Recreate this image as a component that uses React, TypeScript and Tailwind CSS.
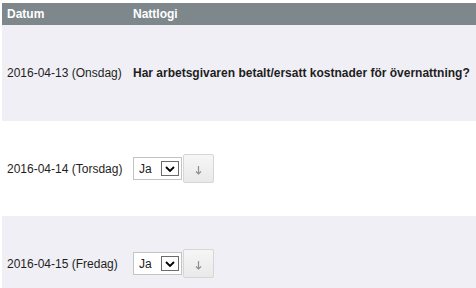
const font = { fontFamily: '"Liberation Sans", Arial, sans-serif' };

const rows = [
  { date: '2016-04-13 (Onsdag)', question: true, h: 'h-[96px]', bg: 'bg-[#f0eff5]' },
  { date: '2016-04-14 (Torsdag)', question: false, h: 'h-[95px]', bg: 'bg-white' },
  { date: '2016-04-15 (Fredag)', question: false, h: 'h-[95px]', bg: 'bg-[#f0eff5]' },
];

const FakeSelect = () => (
  <div className="flex h-[23px] w-[49px] items-center justify-between border border-[#c3c3c3] bg-white pl-[5px] pr-[2px]">
    <span className="text-[12px] leading-none text-[#222]">Ja</span>
    <div className="flex h-[15px] w-[18px] items-center justify-center border border-[#6b6b6b] bg-white">
      <svg width="10" height="6" viewBox="0 0 10 6" fill="none">
        <path d="M1 1l4 4 4-4" stroke="#000" strokeWidth="1.8" />
      </svg>
    </div>
  </div>
);

const DownButton = () => (
  <button className="ml-[1px] flex h-[29px] w-[31px] items-center justify-center rounded-[2px] border border-[#d6d6d6] bg-gradient-to-b from-[#f6f6f6] to-[#e9e9e9] pt-[4px]">
    <svg width="7" height="9" viewBox="0 0 7 9" fill="none">
      <path d="M3.5 0v8M1 5.5l2.5 2.5 2.5-2.5" stroke="#8f8f8f" strokeWidth="1.2" />
    </svg>
  </button>
);

export default function App() {
  return (
    <div className="h-[288px] overflow-hidden bg-white pl-[2px] pt-[3px] text-[12px] text-[#1e1e1e]" style={font}>
      <div className="grid h-[22px] grid-cols-[126px_1fr] items-center bg-[#7e888c] font-bold text-white">
        <div className="pl-[5px]">Datum</div>
        <div className="pl-[5px]">Nattlogi</div>
      </div>
      {rows.map((r) => (
        <div key={r.date} className={`grid grid-cols-[126px_1fr] items-center ${r.h} ${r.bg}`}>
          <div className="whitespace-nowrap pl-[5px]">{r.date}</div>
          <div className="pl-[5px]">
            {r.question ? (
              <span className="whitespace-nowrap font-bold">
                Har arbetsgivaren betalt/ersatt kostnader för övernattning?
              </span>
            ) : (
              <div className="flex items-center">
                <FakeSelect />
                <DownButton />
              </div>
            )}
          </div>
        </div>
      ))}
    </div>
  );
}
